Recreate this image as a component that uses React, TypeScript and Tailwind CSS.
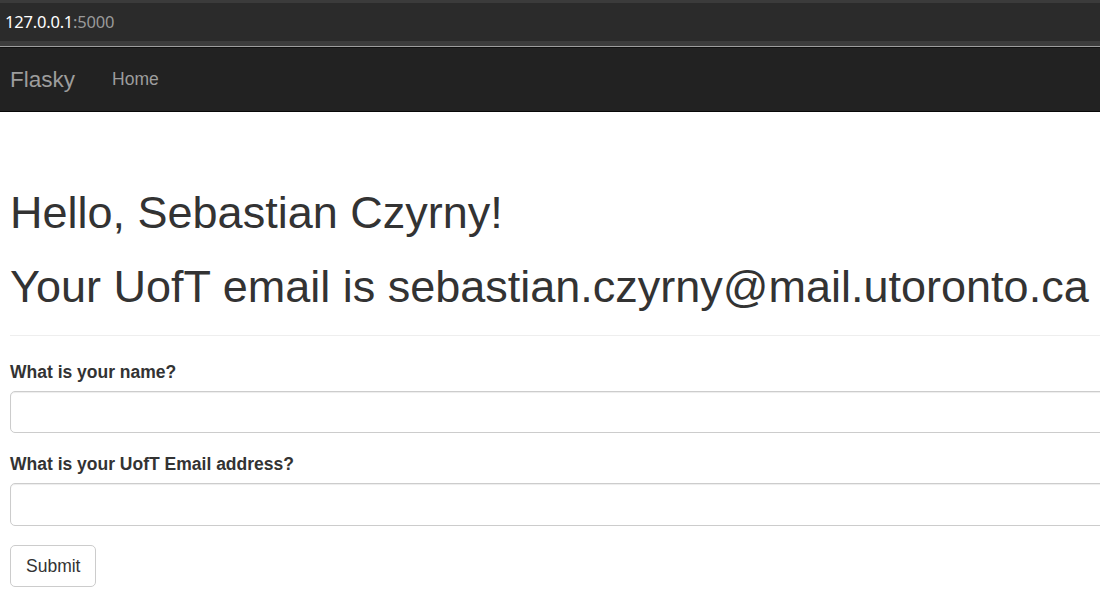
export default function App() {
  return (
    <div className="w-[1100px] h-[608px] overflow-hidden bg-white font-['Liberation_Sans',Arial,sans-serif] text-[#333]">
      {/* Browser address bar */}
      <div className="h-[47px] bg-[#2b2b2b] border-t-[3px] border-[#3b3b3b] flex flex-col">
        <div className="h-[38px] flex items-center pl-[5px] font-['Noto_Sans',sans-serif] text-[16.5px] tracking-[-0.2px]">
          <span className="text-white">127.0.0.1</span>
          <span className="text-[#9a9a9a]">:5000</span>
        </div>
        <div className="h-[5px] bg-[#3d3d3d]" />
        <div className="h-[1px] bg-[#9e9e9e]" />
      </div>

      {/* Navbar */}
      <nav className="h-[65px] bg-[#222] border-t border-t-[#111] border-b border-b-[#080808] flex items-center">
        <a className="pl-[10px] text-[22.5px] leading-[25px] text-[#9d9d9d]">Flasky</a>
        <a className="ml-[37px] text-[17.5px] leading-[25px] text-[#9d9d9d]">Home</a>
      </nav>

      <div className="pl-[10px]">
        {/* Page header */}
        <div className="mt-[76px] pb-[11px] border-b border-[#eee] w-[1200px]">
          <h1 className="text-[45px] leading-[1.1] mb-[12.5px]">Hello, Sebastian Czyrny!</h1>
          <h1 className="text-[45px] leading-[1.1] mt-[24px] mb-[12.5px] whitespace-nowrap">
            Your UofT email is sebastian.czyrny@mail.utoronto.ca
          </h1>
        </div>

        <form className="mt-[24px]">
          <div className="mb-[18.75px]">
            <label className="block font-bold text-[17.5px] leading-[25px] mb-[6.25px]">What is your name?</label>
            <input
              type="text"
              className="block w-[1200px] h-[42.5px] px-[15px] text-[17.5px] border border-[#ccc] rounded-[5px] shadow-[inset_0_1px_1px_rgba(0,0,0,0.075)] outline-none"
            />
          </div>
          <div className="mb-[18.75px]">
            <label className="block font-bold text-[17.5px] leading-[25px] mb-[6.25px]">What is your UofT Email address?</label>
            <input
              type="text"
              className="block w-[1200px] h-[42.5px] px-[15px] text-[17.5px] border border-[#ccc] rounded-[5px] shadow-[inset_0_1px_1px_rgba(0,0,0,0.075)] outline-none"
            />
          </div>
          <button
            type="button"
            className="h-[42.5px] px-[15px] text-[17.5px] text-[#333] bg-white border border-[#ccc] rounded-[5px]"
          >
            Submit
          </button>
        </form>
      </div>
    </div>
  );
}
